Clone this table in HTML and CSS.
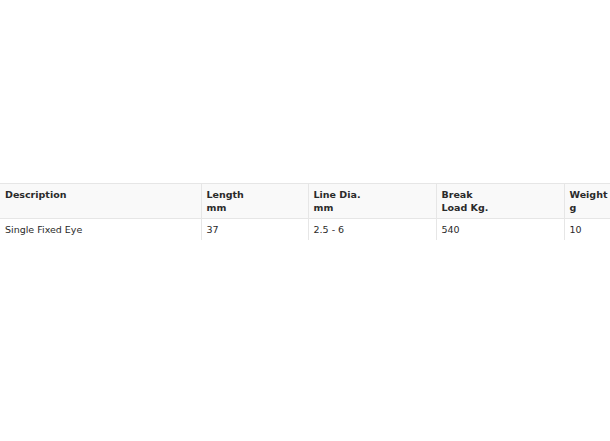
FILE: index.html
```html
<!DOCTYPE html>
<html>
<head>
<meta charset="utf-8">
<link rel="stylesheet" href="styles.css">
</head>
<body>
<div class="wrap">
<table class="specs">
<colgroup>
<col class="c1"><col class="c2"><col class="c3"><col class="c4"><col class="c5">
</colgroup>
<thead>
<tr><th>Description</th><th>Length<br>mm</th><th>Line Dia.<br>mm</th><th>Break<br>Load Kg.</th><th>Weight<br>g</th></tr>
</thead>
<tbody>
<tr><td>Single Fixed Eye</td><td>37</td><td>2.5 - 6</td><td>540</td><td>10</td></tr>
</tbody>
</table>
</div>
</body>
</html>
```
FILE: styles.css
```css
html, body { margin: 0; padding: 0; background: #fff; overflow: hidden; }
.wrap { padding-top: 183px; width: 610px; overflow: hidden; }
.specs {
  border-collapse: collapse;
  table-layout: fixed;
  width: 610px;
  font-family: "DejaVu Sans", Verdana, sans-serif;
  font-size: 9.5px;
  line-height: 13px;
  color: #2a2a2a;
}
.c1 { width: 201px; }
.c2 { width: 107px; }
.c3 { width: 128px; }
.c4 { width: 128px; }
.c5 { width: 46px; }
.specs th, .specs td {
  text-align: left;
  vertical-align: top;
  padding: 4px 0 4px 5px;
  border-left: 1px solid #e6e6e6;
  white-space: nowrap;
}
.specs th:first-child, .specs td:first-child { border-left: none; }
.specs thead tr { background: #f9f9f9; border-top: 1px solid #e6e6e6; border-bottom: 1px solid #e6e6e6; }
.specs th { font-weight: bold; }
```
